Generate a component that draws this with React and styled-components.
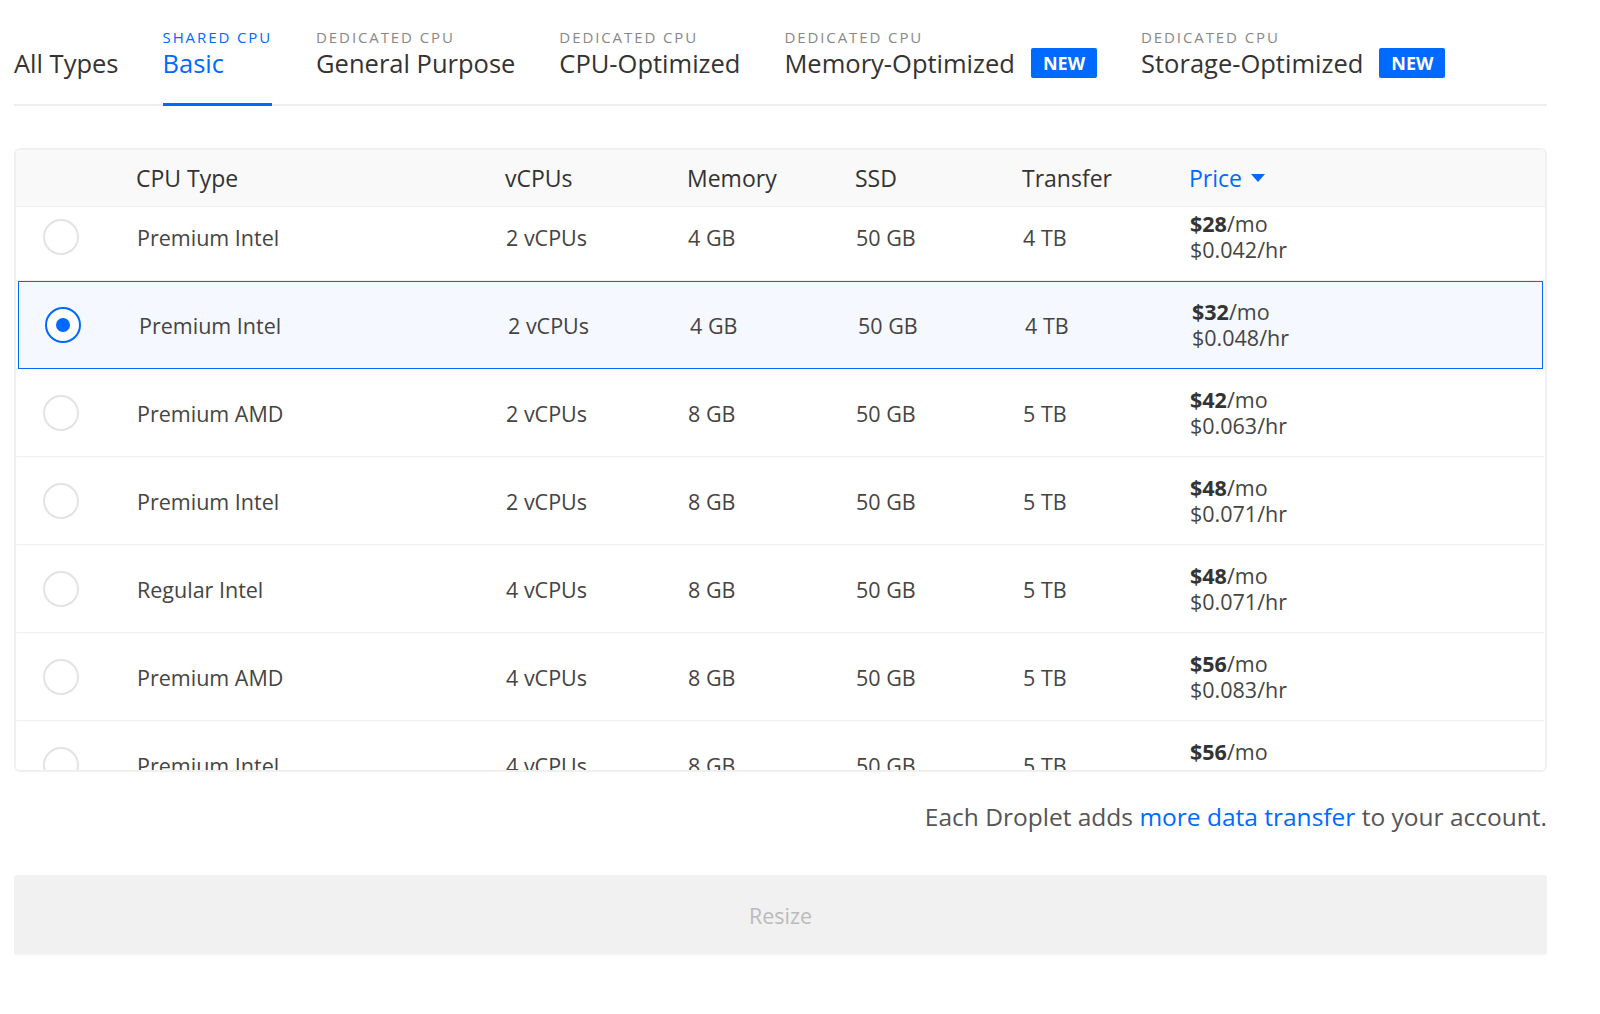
import React, { useRef, useEffect } from "react";
import styled, { createGlobalStyle } from "styled-components";

const Global = createGlobalStyle`
  body { margin: 0; background: #fff; font-family: "Open Sans", "Liberation Sans", sans-serif; color: #333; }
`;

const Page = styled.div`
  padding: 20px 53px 0 14px;
  display: flex; flex-direction: column;
`;
const Tabs = styled.div`
  display: flex; gap: 44px; border-bottom: 2px solid #eee; height: 84px; align-items: stretch;
`;
const Tab = styled.div`
  display: flex; flex-direction: column; justify-content: flex-end; padding-bottom: 24px;
  border-bottom: 3px solid ${p => (p.$active ? "#0069ff" : "transparent")};
  margin-bottom: -2px;
`;
const Kicker = styled.div`
  font-size: 15px; letter-spacing: 1.9px; text-transform: uppercase; margin-bottom: 0;
  color: ${p => (p.$active ? "#0069ff" : "#888")};
`;
const TabTitle = styled.div`
  font-size: 25.5px; line-height: 32px; display: flex; align-items: center; gap: 16px;
  color: ${p => (p.$active ? "#0069ff" : "#333")};
`;
const Badge = styled.span`
  background: #0069ff; color: #fff; font-weight: 700; font-size: 18px; padding: 0 12px;
  height: 30px; line-height: 30px; border-radius: 2px;
`;
const Table = styled.div`
  margin-top: 42px; border: 2px solid #f0f0f0; border-radius: 6px; overflow: hidden;
`;
const cols = "120px 369px 182px 168px 167px 167px 1fr";
const Head = styled.div`
  display: grid; grid-template-columns: ${cols}; height: 56px; align-items: center;
  background: #f9f9f9; border-bottom: 1px solid #eee; font-size: 23px; color: #333;
`;
const HeadCell = styled.div`
  color: ${p => (p.$active ? "#0069ff" : "#333")}; display: flex; align-items: center; gap: 8px;
`;
const Body = styled.div`
  height: 563px; overflow: hidden;
`;
const Row = styled.div`
  display: grid; grid-template-columns: ${cols}; height: 86px; align-items: center; font-size: 21.5px; color: #444;
  border: 1px solid ${p => (p.$sel ? "#0069ff" : "transparent")};
  border-bottom: 1px solid ${p => (p.$sel ? "#0069ff" : "#eee")};
  margin: 0 ${p => (p.$sel ? "2px" : "0")};
  background: ${p => (p.$sel ? "#f5f8ff" : "#fff")};
`;
const RadioWrap = styled.div` display: flex; justify-content: center; padding-right: 32px; `;
const Radio = styled.div`
  width: 36px; height: 36px; border-radius: 50%; box-sizing: border-box;
  border: 2px solid ${p => (p.$on ? "#0069ff" : "#e3e3e3")};
  display: flex; align-items: center; justify-content: center; background: #fff;
  &::after { content: ""; width: 14px; height: 14px; border-radius: 50%; background: ${p => (p.$on ? "#0069ff" : "transparent")}; }
`;
const Price = styled.div` line-height: 26px; `;
const Mo = styled.div` b { font-weight: 700; color: #333; } `;
const Foot = styled.div`
  text-align: right; font-size: 24.5px; color: #555; margin-top: 28px;
  a { color: #0069ff; text-decoration: none; }
`;
const Button = styled.button`
  margin-top: 42px; height: 80px; border: none; background: #f1f1f1; border-radius: 3px;
  color: #bbb; font-size: 21.5px; font-family: inherit;
`;

const rows = [
  ["Premium Intel", "2 vCPUs", "4 GB", "50 GB", "4 TB", "$28", "$0.042"],
  ["Premium Intel", "2 vCPUs", "4 GB", "50 GB", "4 TB", "$32", "$0.048", true],
  ["Premium AMD", "2 vCPUs", "8 GB", "50 GB", "5 TB", "$42", "$0.063"],
  ["Premium Intel", "2 vCPUs", "8 GB", "50 GB", "5 TB", "$48", "$0.071"],
  ["Regular Intel", "4 vCPUs", "8 GB", "50 GB", "5 TB", "$48", "$0.071"],
  ["Premium AMD", "4 vCPUs", "8 GB", "50 GB", "5 TB", "$56", "$0.083"],
  ["Premium Intel", "4 vCPUs", "8 GB", "50 GB", "5 TB", "$56", "$0.083"],
];

const tabs = [
  [null, "All Types"],
  ["Shared CPU", "Basic", false, true],
  ["Dedicated CPU", "General Purpose"],
  ["Dedicated CPU", "CPU-Optimized"],
  ["Dedicated CPU", "Memory-Optimized", true],
  ["Dedicated CPU", "Storage-Optimized", true],
];

export default function App() {
  const ref = useRef(null);
  useEffect(() => { if (ref.current) ref.current.scrollTop = 14; }, []);
  return (
    <Page>
      <Global />
      <Tabs>
        {tabs.map(([k, t, isNew, active]) => (
          <Tab key={t} $active={active}>
            {k && <Kicker $active={active}>{k}</Kicker>}
            <TabTitle $active={active}>{t}{isNew && <Badge>NEW</Badge>}</TabTitle>
          </Tab>
        ))}
      </Tabs>
      <Table>
        <Head>
          <div />
          <HeadCell>CPU Type</HeadCell>
          <HeadCell>vCPUs</HeadCell>
          <HeadCell>Memory</HeadCell>
          <HeadCell>SSD</HeadCell>
          <HeadCell>Transfer</HeadCell>
          <HeadCell $active>Price
            <svg width="16" height="10" viewBox="0 0 16 10"><path d="M1 1h14L8 9z" fill="#0069ff" /></svg>
          </HeadCell>
        </Head>
        <Body ref={ref}>
          {rows.map((r, i) => (
            <Row key={i} $sel={r[7]}>
              <RadioWrap><Radio $on={r[7]} /></RadioWrap>
              <div>{r[0]}</div><div>{r[1]}</div><div>{r[2]}</div><div>{r[3]}</div><div>{r[4]}</div>
              <Price><Mo><b>{r[5]}</b>/mo</Mo><div>{r[6]}/hr</div></Price>
            </Row>
          ))}
        </Body>
      </Table>
      <Foot>Each Droplet adds <a href="#">more data transfer</a> to your account.</Foot>
      <Button>Resize</Button>
    </Page>
  );
}
